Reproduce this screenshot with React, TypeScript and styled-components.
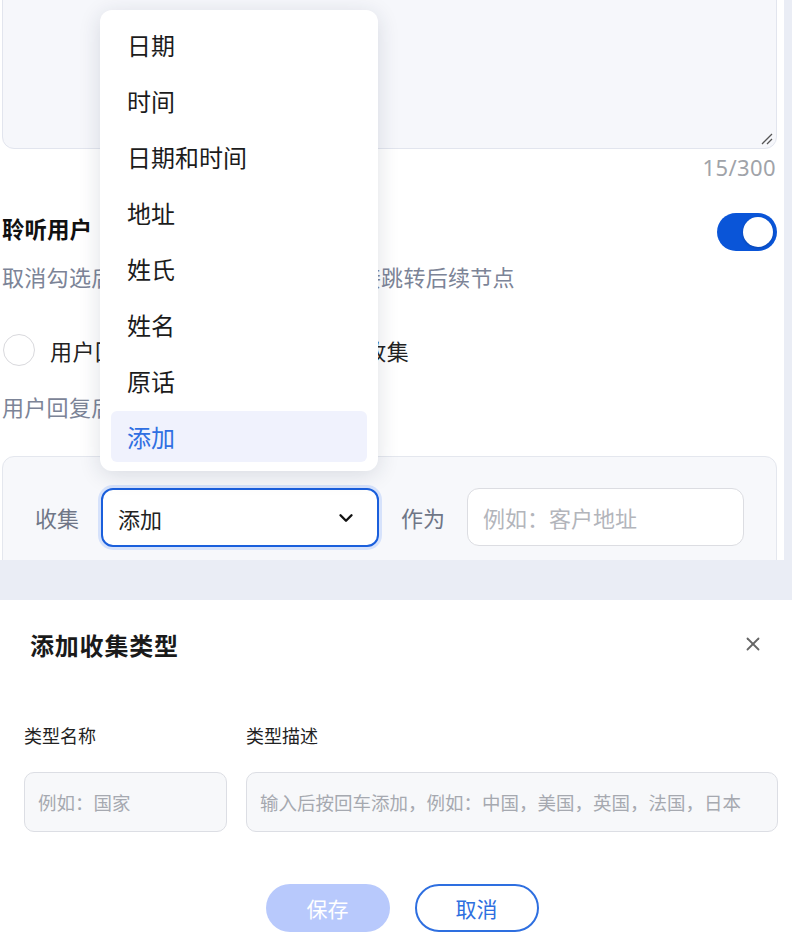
import React from "react";
import styled, { createGlobalStyle } from "styled-components";
import { ChevronDown, X } from "lucide-react";

const GlobalStyle = createGlobalStyle`
  html, body {
    margin: 0;
    padding: 0;
    background: #eaedf5;
    font-family: "Noto Sans CJK SC", "Noto Sans", sans-serif;
  }
  * { box-sizing: border-box; }
`;

const options = ["日期", "时间", "日期和时间", "地址", "姓氏", "姓名", "原话", "添加"];

const App: React.FC = () => {
  return (
    <Page>
      <GlobalStyle />
      <TopPanel>
        <Content>
          <TextBox>
            <Grip width="14" height="14" viewBox="0 0 14 14">
              <path d="M13 3 L3 13 M13 8 L8 13" stroke="#555" strokeWidth="1.3" fill="none" />
            </Grip>
          </TextBox>
          <Counter>15/300</Counter>
          <HeadRow>
            <Heading>聆听用户　回复</Heading>
            <Toggle>
              <Knob />
            </Toggle>
          </HeadRow>
          <Hint $top={10}>取消勾选后，机器人播报完毕后将直接跳转后续节点</Hint>
          <RadioRow>
            <Radio />
            <RadioLabel>用户回复后将用户回复内容进行收集</RadioLabel>
          </RadioRow>
          <Hint $top={25}>用户回复后将进行收集</Hint>
          <CollectCard>
            <FieldLabel>收集</FieldLabel>
            <Select>
              <span>添加</span>
              <ChevronDown size={22} strokeWidth={2.6} color="#111" />
            </Select>
            <FieldLabel>作为</FieldLabel>
            <PlainInput>例如：客户地址</PlainInput>
          </CollectCard>
        </Content>
        <Menu>
          {options.map((o) => (
            <MenuItem key={o} $active={o === "添加"}>
              {o}
            </MenuItem>
          ))}
        </Menu>
      </TopPanel>
      <Band />
      <Modal>
        <ModalHead>
          <ModalTitle>添加收集类型</ModalTitle>
          <X size={22} strokeWidth={2} color="#666" />
        </ModalHead>
        <FormGrid>
          <FormLabel>类型名称</FormLabel>
          <FormLabel>类型描述</FormLabel>
          <FormInput>例如：国家</FormInput>
          <FormInput>输入后按回车添加，例如：中国，美国，英国，法国，日本</FormInput>
        </FormGrid>
        <Actions>
          <PrimaryButton>保存</PrimaryButton>
          <GhostButton>取消</GhostButton>
        </Actions>
      </Modal>
    </Page>
  );
};

const Page = styled.div`
  width: 792px;
  min-height: 938px;
  background: #eaedf5;
`;

const TopPanel = styled.div`
  position: relative;
  width: 784px;
  height: 560px;
  background: #fff;
  overflow: hidden;
`;

const Content = styled.div`
  padding-left: 2px;
  width: 777px;
`;

const TextBox = styled.div`
  position: relative;
  margin-top: -20px;
  height: 169px;
  background: #f6f7fb;
  border: 1px solid #e2e5ee;
  border-radius: 12px;
`;

const Grip = styled.svg`
  position: absolute;
  right: 3px;
  bottom: 3px;
`;

const Counter = styled.div`
  margin-top: 3px;
  text-align: right;
  font-family: "Noto Sans", sans-serif;
  font-size: 22px;
  line-height: 30px;
  color: #a0a3a9;
  padding-right: 1px;
  letter-spacing: 0.4px;
`;

const HeadRow = styled.div`
  display: flex;
  justify-content: space-between;
  align-items: flex-start;
  margin-top: 31px;
`;

const Heading = styled.div`
  font-size: 22.5px;
  line-height: 30px;
  font-weight: 700;
  color: #111;
  white-space: pre;
`;

const Toggle = styled.div`
  width: 60px;
  height: 38px;
  border-radius: 19px;
  background: #0a55d8;
  display: flex;
  align-items: center;
  justify-content: flex-end;
  padding-right: 4px;
`;

const Knob = styled.div`
  width: 30px;
  height: 30px;
  border-radius: 50%;
  background: #fff;
  box-shadow: 0 1px 3px rgba(0, 0, 0, 0.2);
`;

const Hint = styled.div<{ $top: number }>`
  margin-top: ${(p) => p.$top}px;
  font-size: 22px;
  line-height: 30px;
  letter-spacing: 0.3px;
  color: #7c8497;
  white-space: nowrap;
`;

const RadioRow = styled.div`
  display: flex;
  align-items: center;
  gap: 15px;
  margin-top: 43px;
`;

const Radio = styled.div`
  width: 32px;
  height: 32px;
  margin-left: 1px;
  border-radius: 50%;
  border: 1.5px solid #d9d9dd;
  background: #fff;
`;

const RadioLabel = styled.div`
  font-size: 22px;
  line-height: 30px;
  letter-spacing: 0.45px;
  color: #222;
`;

const CollectCard = styled.div`
  margin-top: 35px;
  height: 140px;
  background: #f7f8fb;
  border: 1px solid #e4e7ee;
  border-radius: 12px;
  padding: 31px 32px 0 32px;
  display: flex;
  align-items: flex-start;
  gap: 22px;
`;

const FieldLabel = styled.div`
  font-size: 22px;
  line-height: 58px;
  color: #6f7687;
  white-space: nowrap;
`;

const Select = styled.div`
  width: 278px;
  height: 59px;
  border: 2px solid #1a5fdc;
  box-shadow: 0 0 0 3px #d6e2fb;
  border-radius: 12px;
  background: #fff;
  display: flex;
  align-items: center;
  justify-content: space-between;
  padding: 0 20px 0 15px;
  font-size: 22px;
  color: #222;
`;

const PlainInput = styled.div`
  width: 277px;
  height: 58px;
  border: 1.5px solid #dcdde2;
  border-radius: 12px;
  background: #fff;
  display: flex;
  align-items: center;
  padding-left: 15px;
  font-size: 22px;
  color: #b3b5bb;
`;

const Menu = styled.div`
  position: absolute;
  left: 100px;
  top: 10px;
  width: 278px;
  padding: 9px 11px;
  background: #fff;
  border-radius: 12px;
  box-shadow: 0 4px 22px rgba(30, 40, 70, 0.14);
  display: flex;
  flex-direction: column;
  gap: 5px;
`;

const MenuItem = styled.div<{ $active?: boolean }>`
  height: 51px;
  display: flex;
  align-items: center;
  padding-left: 16px;
  border-radius: 6px;
  font-size: 24px;
  color: ${(p) => (p.$active ? "#2f6fe2" : "#1c1c1c")};
  background: ${(p) => (p.$active ? "#f0f2fd" : "transparent")};
`;

const Band = styled.div`
  height: 40px;
  background: #eaedf5;
`;

const Modal = styled.div`
  background: #fff;
  height: 338px;
  padding: 28px 14px 0 24px;
`;

const ModalHead = styled.div`
  display: flex;
  justify-content: space-between;
  align-items: center;
  padding-left: 6px;
  padding-right: 14px;
  height: 32px;
`;

const ModalTitle = styled.div`
  font-size: 24px;
  font-weight: 700;
  letter-spacing: 0.8px;
  color: #1a1a1a;
`;

const FormGrid = styled.div`
  display: grid;
  grid-template-columns: 203px 532px;
  column-gap: 19px;
  row-gap: 24px;
  margin-top: 62px;
`;

const FormLabel = styled.div`
  font-size: 18px;
  line-height: 26px;
  color: #222;
`;

const FormInput = styled.div`
  height: 60px;
  background: #f7f8fa;
  border: 1.5px solid #dcdee4;
  border-radius: 10px;
  display: flex;
  align-items: center;
  padding-left: 13px;
  font-size: 18.5px;
  color: #a6a9b0;
  white-space: nowrap;
`;

const Actions = styled.div`
  display: flex;
  justify-content: center;
  gap: 25px;
  margin-top: 52px;
  margin-left: 2px;
`;

const PrimaryButton = styled.div`
  width: 124px;
  height: 48px;
  border-radius: 24px;
  background: #b8c9fc;
  color: #fff;
  font-size: 21px;
  display: flex;
  align-items: center;
  justify-content: center;
`;

const GhostButton = styled(PrimaryButton)`
  background: #fff;
  border: 2px solid #2e6fe0;
  color: #2e6fe0;
`;

export default App;
